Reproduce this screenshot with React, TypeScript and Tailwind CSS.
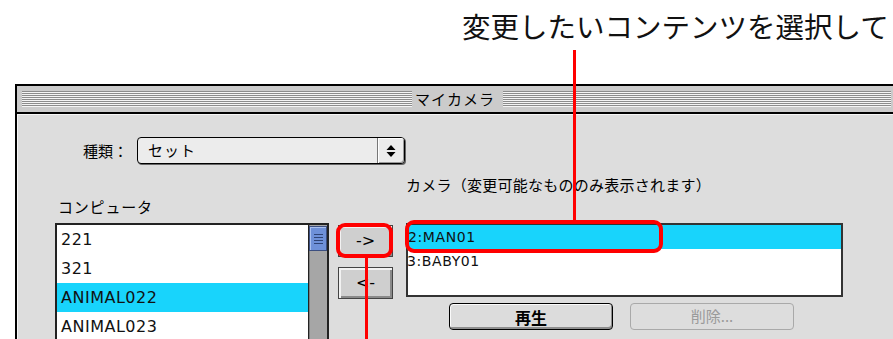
import React from "react";

const ui = "font-['DejaVu_Sans','Noto_Sans_CJK_JP',sans-serif]";
const jp = "font-['Noto_Sans_CJK_JP',sans-serif]";

function Stripes({ className }: { className?: string }) {
  return (
    <div className={"flex flex-col " + (className ?? "")}>
      {Array.from({ length: 8 }).map((_, i) => (
        <div key={i} className="flex flex-col">
          <div className="h-px bg-[#8c8c8c]" />
          <div className="h-px bg-[#f4f4f4]" />
        </div>
      ))}
    </div>
  );
}

function BevelButton({ label }: { label: string }) {
  return (
    <div className="w-[55px] h-[32px] border border-[#444] bg-[#cfcfcf] shadow-[inset_2px_2px_0_#f2f2f2,inset_-2px_-2px_0_#8a8a8a] flex items-center justify-center text-[16px] text-black">
      <span className={ui}>{label}</span>
    </div>
  );
}

export default function App() {
  const left = ["221", "321", "ANIMAL022", "ANIMAL023"];
  return (
    <div className="relative w-[893px] h-[339px] overflow-hidden bg-white">
      <div
        className={
          "h-[84px] pl-[462px] pt-[10px] text-[28.5px] leading-[32px] text-[#111] whitespace-nowrap " +
          jp
        }
      >
        変更したいコンテンツを選択して
      </div>

      <div className="ml-[15px] h-[255px] border-l-2 border-t-2 border-black bg-[#dddddd] flex flex-col">
        {/* title bar */}
        <div className="h-[28px] shrink-0 border-b-2 border-black bg-[#cbcbcb] flex items-center pl-[5px] pr-[2px]">
          <Stripes className="w-[390px]" />
          <div className={"ml-[3px] w-[80px] text-[15px] leading-[18px] tracking-[1px] text-black " + jp}>
            マイカメラ
          </div>
          <Stripes className="ml-[8px] flex-1" />
        </div>

        {/* body */}
        <div className="flex flex-col shadow-[inset_1px_1px_0_#f6f6f6] flex-1">
          {/* select row */}
          <div className="mt-[23px] pl-[66px] flex items-center">
            <div className={"w-[45px] text-[15px] leading-[18px] text-black " + jp}>種類：</div>
            <div className="ml-[9px] w-[268px] h-[27px] rounded-[4px] border border-black bg-[#ececec] shadow-[1px_1px_0_#666] flex">
              <div className={"flex-1 pl-[10px] flex items-center text-[15px] tracking-[1px] text-black " + jp}>
                セット
              </div>
              <div className="w-[27px] border-l border-[#777] rounded-r-[3px] shadow-[inset_1px_1px_0_#fff,inset_-1px_-1px_0_#999] flex items-center justify-center">
                <svg width="10" height="14" viewBox="0 0 10 14">
                  <path d="M5 1 L9.5 6 L0.5 6 Z" fill="#000" />
                  <path d="M5 13 L9.5 8 L0.5 8 Z" fill="#000" />
                </svg>
              </div>
            </div>
          </div>

          {/* main area */}
          <div className="pl-[38px] flex items-start">
            {/* left column */}
            <div className="w-[274px] mt-[34px] flex flex-col">
              <div className={"pl-[3px] text-[15px] leading-[18px] tracking-[0.8px] text-black " + jp}>
                コンピュータ
              </div>
              <div className="mt-[7px] h-[140px] border-2 border-[#222] bg-white flex">
                <div className="flex-1 flex flex-col">
                  {left.map((t, i) => (
                    <div
                      key={t}
                      className={
                        "h-[29px] shrink-0 pl-[4px] flex items-center text-[16px] tracking-[0.5px] text-[#111] " +
                        ui +
                        (i === 2 ? " bg-[#18d4fc]" : "")
                      }
                    >
                      {t}
                    </div>
                  ))}
                </div>
                <div className="w-[19px] border-l border-[#222] bg-[#a6a6a6] shadow-[inset_1px_0_0_#7d7d7d] flex flex-col pt-[1px]">
                  <div className="h-[25px] bg-[#6e90d8] border border-[#3c4f80] shadow-[inset_1px_1px_0_#a9c0ef] flex flex-col items-center justify-center gap-[2px]">
                    {[0, 1, 2, 3].map((i) => (
                      <div key={i} className="w-[9px] h-px bg-[#2f4476]" />
                    ))}
                  </div>
                </div>
              </div>
            </div>

            {/* transfer buttons */}
            <div className="ml-[9px] mt-[61px] flex flex-col gap-[10px]">
              <BevelButton label="->" />
              <BevelButton label="<-" />
            </div>

            {/* right column */}
            <div className="ml-[13px] mt-[12px] w-[437px] flex flex-col">
              <div className={"text-[15px] leading-[18px] tracking-[0.25px] text-black " + jp}>
                カメラ（変更可能なもののみ表示されます）
              </div>
              <div className="mt-[29px] h-[74px] border-2 border-[#333] bg-white flex flex-col">
                <div className={"h-[24px] bg-[#18d4fc] flex items-center text-[14px] tracking-[0.6px] text-[#111] " + ui}>
                  2:MAN01
                </div>
                <div className={"h-[24px] flex items-center text-[14px] tracking-[0.6px] text-[#111] -ml-[1px] " + ui}>
                  3:BABY01
                </div>
              </div>
              <div className="mt-[6px] pl-[43px] flex gap-[17px]">
                <div className={"w-[164px] h-[27px] rounded-[4px] border border-black bg-[#dcdcdc] shadow-[inset_1px_1px_0_#fafafa,inset_-1px_-2px_0_#8e8e8e] flex items-center justify-center text-[16px] font-bold text-black " + jp}>
                  再生
                </div>
                <div className={"w-[164px] h-[27px] rounded-[4px] border border-[#a9a9a9] bg-[#dddddd] flex items-center justify-center text-[15px] text-[#9a9a9a] " + jp}>
                  削除...
                </div>
              </div>
            </div>
          </div>
        </div>
      </div>

      {/* red annotations */}
      <div className="absolute left-[573px] top-[50px] w-[3px] h-[171px] bg-[#ff0000]" />
      <div className="absolute left-[405px] top-[220px] w-[258px] h-[33px] rounded-[9px] border-[4px] border-[#ff0000]" />
      <div className="absolute left-[336px] top-[223px] w-[57px] h-[35px] rounded-[9px] border-[4px] border-[#ff0000]" />
      <div className="absolute left-[365px] top-[257px] w-[3px] h-[90px] bg-[#ff0000]" />
    </div>
  );
}
